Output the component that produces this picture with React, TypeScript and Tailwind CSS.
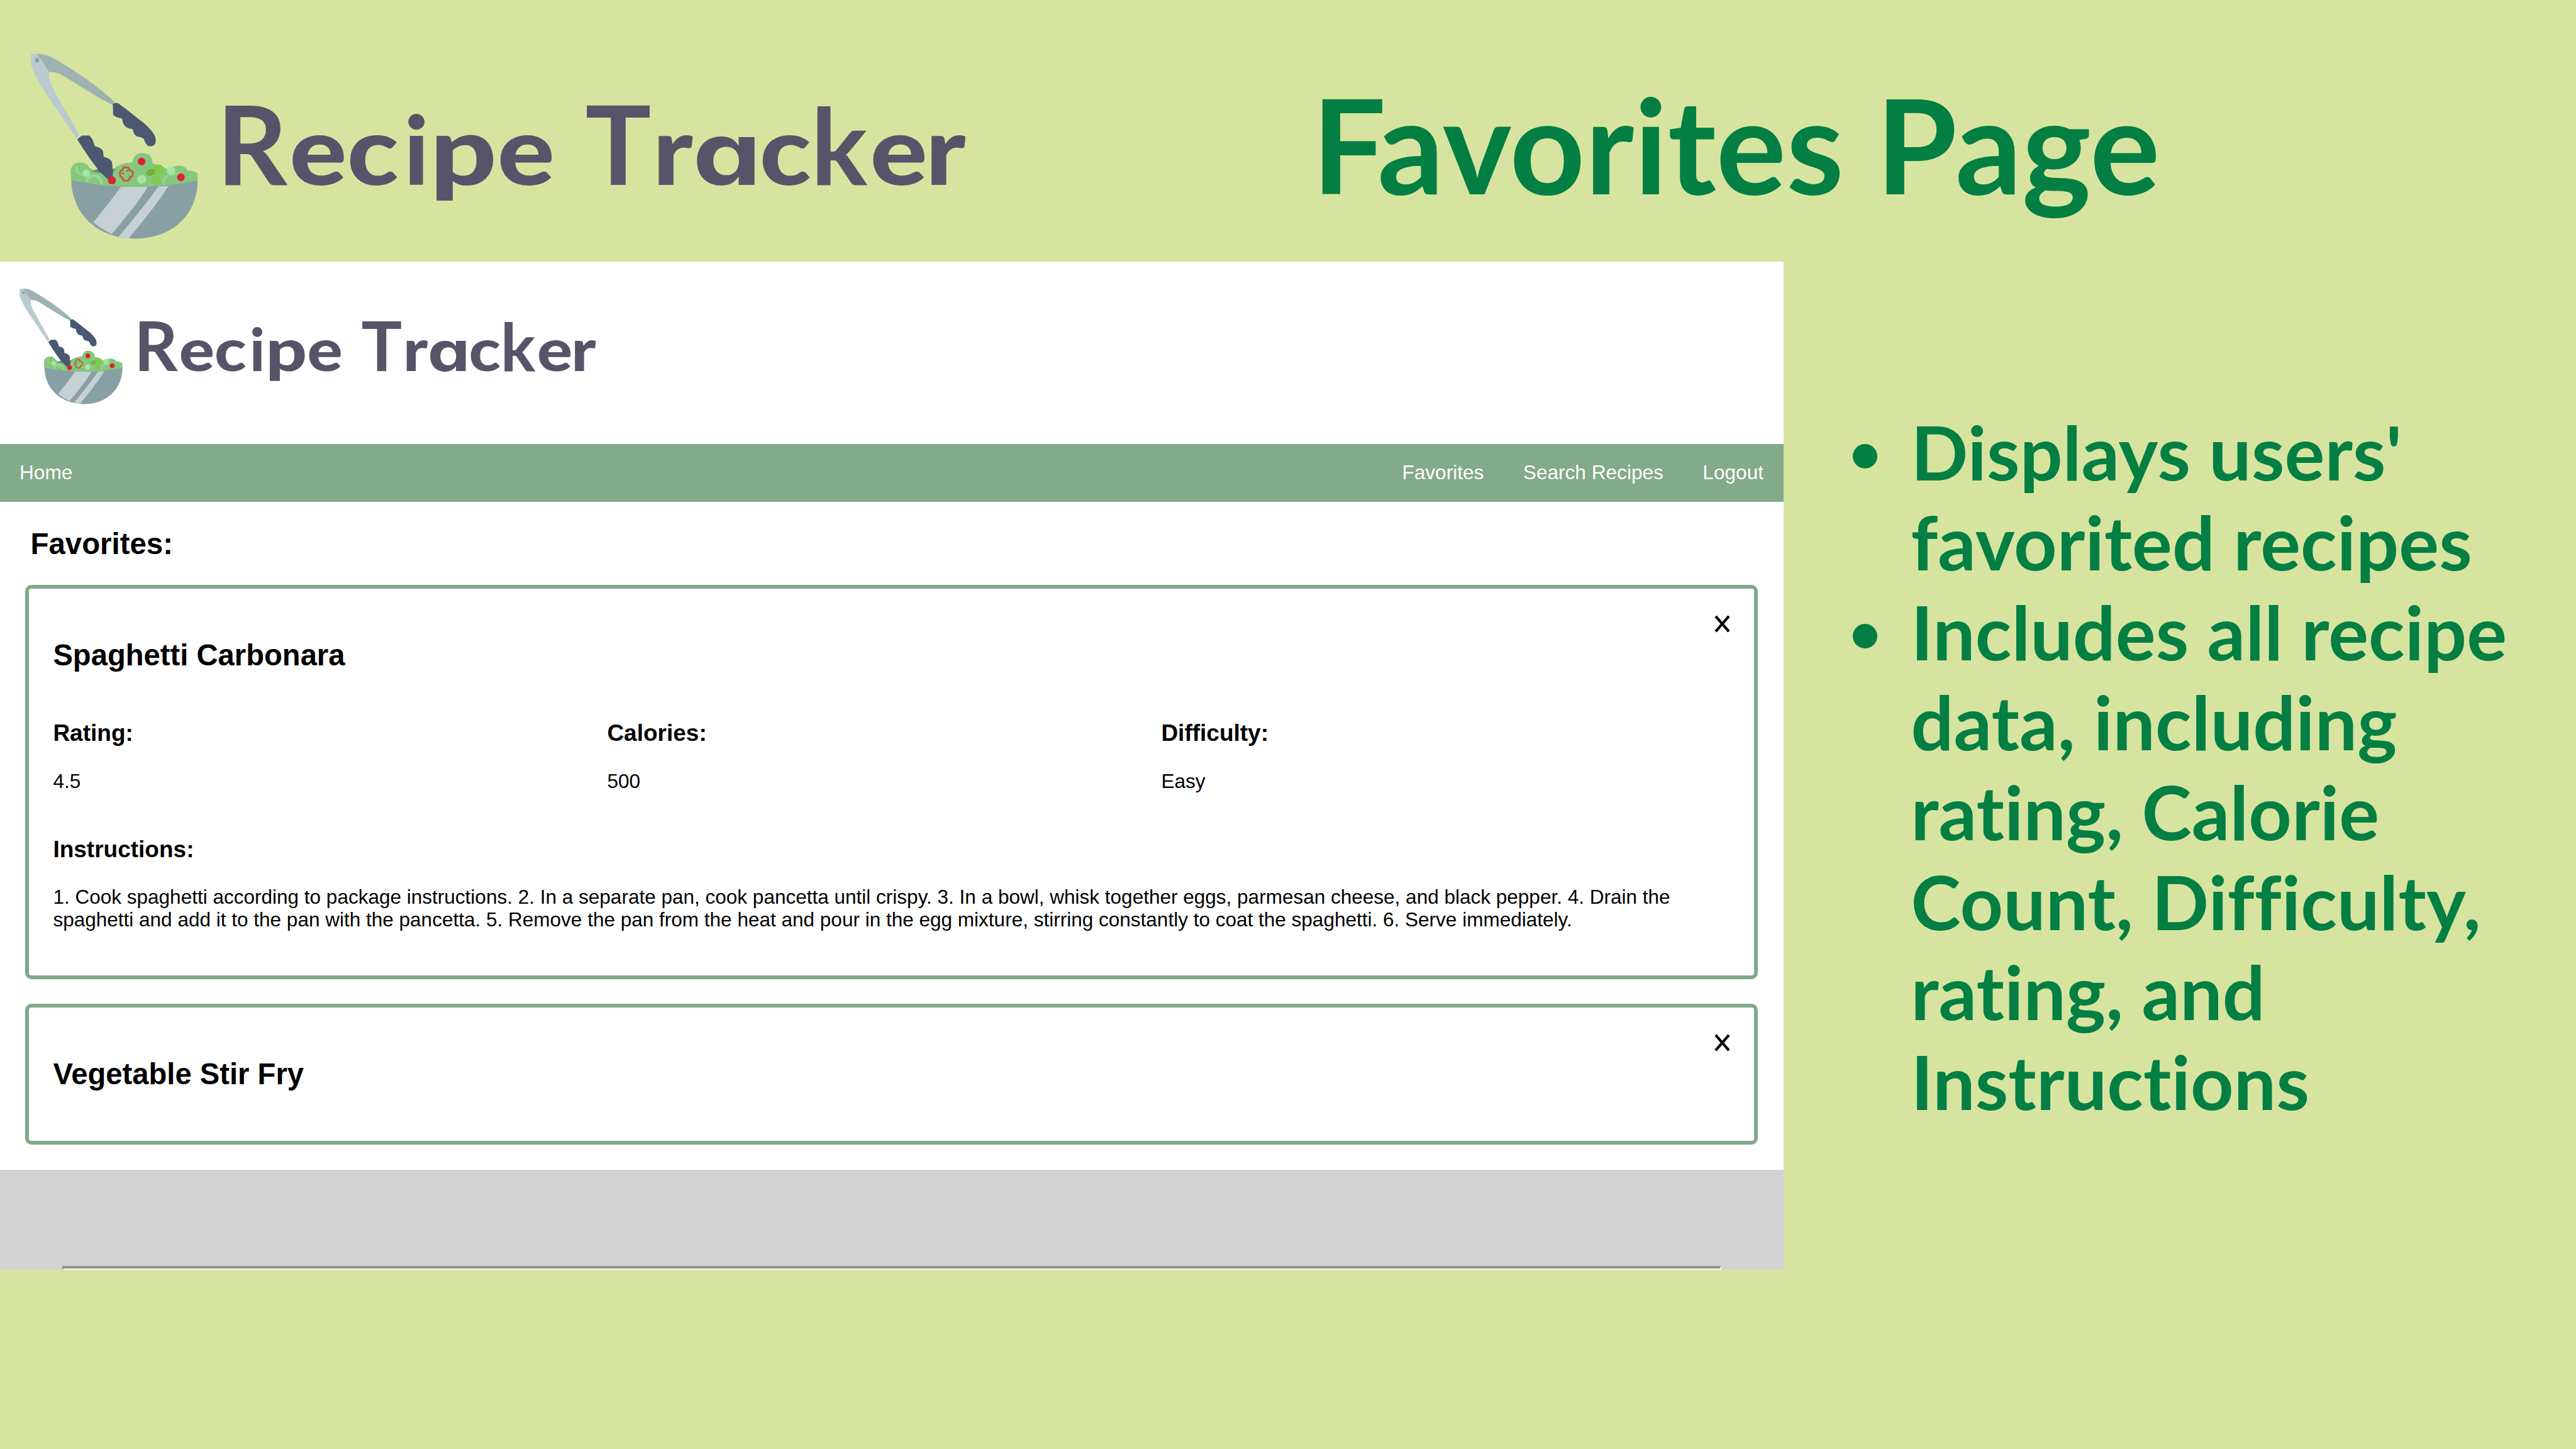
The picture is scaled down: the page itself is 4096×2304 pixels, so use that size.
import React from "react";

function SaladMark() {
  return (
    <g transform="translate(-1.5 40.5) scale(0.24381)">
      {/* far tong arm */}
      <path
        d="M240 186 Q300 182 352 212 Q440 262 540 330 Q640 396 752 496 L742 520 Q640 468 540 404 Q450 345 392 314 Q360 300 326 304 L262 230 Z"
        fill="#9eb2b2"
      />
      {/* near tong arm */}
      <path
        d="M208 186 L246 186 L290 244 L326 306 Q320 345 345 395 Q410 520 524 712 L506 738 Q400 580 316 460 Q222 320 208 250 Z"
        fill="#b9cbcf"
      />
      <rect x="235" y="213" width="25" height="27" fill="#8b9ea8" />
      {/* salad */}
      <path
        d="M468 1008 L466 950 Q470 895 535 893 Q575 896 590 930 L652 960 L740 940 Q790 895 868 893 Q880 832 936 832 Q1000 838 1002 900 Q1030 905 1060 915 Q1085 935 1100 935 Q1130 915 1180 915 Q1222 922 1228 946 Q1280 946 1294 966 L1295 1020 Q1090 1056 880 1056 Q640 1052 468 1008 Z"
        fill="#84c77d"
      />
      <path d="M505 915 Q500 965 545 975" stroke="#9ad394" strokeWidth="12" fill="none" />
      <path d="M572 1015 Q585 975 630 980 Q668 990 668 1036" stroke="#9cd696" strokeWidth="16" fill="none" />
      <path d="M1075 1040 Q1060 990 1110 978 L1170 965" stroke="#94d38c" strokeWidth="16" fill="none" />
      <circle cx="568" cy="964" r="24" fill="#a6e6a0" />
      <circle cx="930" cy="1004" r="29" fill="#a5e59e" />
      <circle cx="1122" cy="946" r="28" fill="#a6e6a0" />
      <circle cx="1040" cy="942" r="36" fill="#83ca4a" />
      <circle cx="1027" cy="1010" r="29" fill="#83ca4a" />
      <path d="M955 962 L980 936 L1018 936 L1014 972 L980 982 Z" fill="#74b13c" />
      <path d="M600 952 L650 934 L760 934 L745 962 L655 962 Z" fill="#648a80" />
      {/* tong grips */}
      <path
        d="M742 512 Q755 500 778 508 Q860 570 920 618 Q975 655 1012 712 Q1028 740 1018 772 Q1005 792 975 786 Q955 775 945 740 Q930 728 900 724 Q878 715 872 676 Q830 672 816 650 Q806 635 802 606 Q765 602 744 582 Z"
        fill="#4a5872"
      />
      <path
        d="M510 742 L540 718 L588 718 Q612 735 624 788 Q665 795 678 820 L682 856 Q722 865 735 888 Q742 915 742 990 L712 1004 Q690 985 650 945 Q575 850 510 742 Z"
        fill="#4a5872"
      />
      {/* tomatoes and pepper */}
      <circle cx="930" cy="887" r="25" fill="#dd1f31" />
      <circle cx="736" cy="1010" r="26" fill="#dd1f31" />
      <circle cx="1186" cy="990" r="25" fill="#dd1f31" />
      <path
        d="M824 924 Q850 924 850 944 Q876 948 872 974 Q868 990 852 992 Q852 1014 828 1014 Q806 1010 804 992 Q786 984 788 964 Q790 946 804 944 Q806 924 824 924 Z"
        fill="#84c77d"
        stroke="#c65a3c"
        strokeWidth="12"
      />
      <path d="M800 964 L816 966 M838 942 L834 954 M850 984 L862 988" stroke="#c65a3c" strokeWidth="10" />
      {/* bowl */}
      <path
        d="M470 1008 Q660 1052 880 1052 Q1090 1052 1295 1012 C1295 1240 1120 1390 890 1390 C650 1390 478 1240 470 1008 Z"
        fill="#889fa4"
      />
      <path d="M795 1052 L968 1052 Q930 1130 735 1360 Q670 1330 615 1283 Q700 1180 795 1052 Z" fill="#c7d1d3" />
      <path d="M1040 1050 L1105 1047 Q1020 1180 845 1389 L778 1380 Q930 1200 1040 1050 Z" fill="#c7d1d3" />
    </g>
  );
}

const small = { fontSize: 151, fontWeight: 900, lengthAdjust: "spacingAndGlyphs" as const };
const caps = { fontSize: 175, fontWeight: 700 };

function Logo({ className, viewBox, baseline }: { className: string; viewBox: string; baseline: number }) {
  return (
    <svg className={className} viewBox={viewBox} preserveAspectRatio="none">
      <SaladMark />
      <text y={baseline} fill="#575469" fontFamily="Lato, sans-serif">
        <tspan x="344.5" {...caps}>R</tspan>
        <tspan x="460.3" textLength="91.2" {...small}>e</tspan>
        <tspan x="551.7" textLength="82" {...small}>c</tspan>
        <tspan x="642.4" fontSize="151" fontWeight="900">i</tspan>
        <tspan x="683.6" textLength="106.6" {...small}>p</tspan>
        <tspan x="790.7" textLength="91.2" {...small}>e</tspan>
        <tspan fontSize="100"> </tspan>
        <tspan x="930.4" {...caps}>T</tspan>
        <tspan x="1037.8" textLength="64" {...small}>r</tspan>
        <tspan
          x="1101.5"
          textLength="109"
          lengthAdjust="spacingAndGlyphs"
          fontSize="140"
          fontWeight="700"
          fontFamily="Inter, sans-serif"
          style={{ fontFeatureSettings: "'cv11' 1" }}
        >
          a
        </tspan>
        <tspan x="1207.7" textLength="82" {...small}>c</tspan>
        <tspan x="1289.6" fontSize="168" fontWeight="700">k</tspan>
        <tspan x="1383.5" textLength="91.2" {...small}>e</tspan>
        <tspan x="1471.6" textLength="64" {...small}>r</tspan>
      </text>
    </svg>
  );
}

function CloseButton() {
  return (
    <button className="absolute right-[38.5px] top-[41.5px]" aria-label="Remove">
      <svg className="block h-[28px] w-[25px]" viewBox="0 0 25 28">
        <path d="M2 1.8 L23 26.2 M23 1.8 L2 26.2" stroke="#000" strokeWidth="4.3" />
      </svg>
    </button>
  );
}

const stats = [
  { label: "Rating:", value: "4.5" },
  { label: "Calories:", value: "500" },
  { label: "Difficulty:", value: "Easy" },
];

function AppPreview() {
  return (
    <section className="flex h-[1602.5px] w-[2836px] shrink-0 flex-col overflow-hidden bg-white font-['Liberation_Sans',Arial,sans-serif] text-black">
      <div className="h-[289.6px] shrink-0">
        <Logo className="block h-[289.6px] w-[962px]" viewBox="-1.4 16.7 1560 463.8" baseline={295.8} />
      </div>
      <nav className="flex h-[92px] shrink-0 items-start justify-between bg-[#83aa89] pl-[31px] pr-[32px] pt-[30.4px] text-[31.6px] leading-none text-white">
        <a>Home</a>
        <div className="flex gap-[62.5px]">
          <a>Favorites</a>
          <a>Search Recipes</a>
          <a>Logout</a>
        </div>
      </nav>
      <h2 className="ml-[48.5px] mt-[42.6px] shrink-0 text-[47.4px] font-bold leading-[48px]">Favorites:</h2>

      <article className="relative ml-[40px] mt-[41.7px] h-[627px] w-[2755px] shrink-0 rounded-[10px] border-[6px] border-[#80a986] pl-[38.4px] pt-[82px]">
        <CloseButton />
        <h3 className="text-[47.2px] font-bold leading-[48px]">Spaghetti Carbonara</h3>
        <div className="mt-[81.2px] grid grid-cols-[881px_881px_881px]">
          {stats.map((s) => (
            <div key={s.label}>
              <h4 className="text-[37px] font-bold leading-[37px]">{s.label}</h4>
              <p className="mt-[42px] text-[31.6px] leading-[32px]">{s.value}</p>
            </div>
          ))}
        </div>
        <h4 className="mt-[73.3px] text-[37px] font-bold leading-[37px]">Instructions:</h4>
        <p className="mt-[39.5px] w-[2671px] text-[31.53px] leading-[36.2px]">
          1. Cook spaghetti according to package instructions. 2. In a separate pan, cook pancetta until crispy. 3. In a
          bowl, whisk together eggs, parmesan cheese, and black pepper. 4. Drain the spaghetti and add it to the pan
          with the pancetta. 5. Remove the pan from the heat and pour in the egg mixture, stirring constantly to coat
          the spaghetti. 6. Serve immediately.
        </p>
      </article>

      <article className="relative ml-[40px] mt-[39.2px] h-[224px] w-[2755px] shrink-0 rounded-[10px] border-[6px] border-[#80a986] pl-[38.4px] pt-[82px]">
        <CloseButton />
        <h3 className="text-[47.2px] font-bold leading-[48px]">Vegetable Stir Fry</h3>
      </article>

      <footer className="mt-[39.4px] flex-1 bg-[#d2d2d2] pt-[153px]">
        <hr className="ml-[99px] h-0 w-[2638px] border-b-2 border-l-[3px] border-r-[3px] border-t-4 border-b-[#f2f2f2] border-l-[#94948e] border-r-[#f2f2f2] border-t-[#94948e]" />
      </footer>
    </section>
  );
}

const notes = [
  "Displays users' favorited recipes",
  "Includes all recipe data, including rating, Calorie Count, Difficulty, rating, and Instructions",
];

export default function App() {
  return (
    <main className="flex h-[2304px] w-[4096px] flex-col overflow-hidden bg-[#d7e4a0] font-['Lato',sans-serif] text-[#047f43]">
      <header className="flex h-[416.4px] shrink-0 items-start">
        <Logo className="block h-[416px] w-[1560px] shrink-0" viewBox="0 0 1560 416" baseline={293.8} />
        <h1 className="ml-[526px] mt-[124px] whitespace-nowrap text-[208.4px] font-bold leading-none tracking-[0.25px]">
          Favorites Page
        </h1>
      </header>
      <div className="flex items-start">
        <AppPreview />
        <ul className="ml-[110px] mt-[229.4px] text-[119.6px] font-bold leading-[143.1px] tracking-[0.1px]">
          {notes.map((n) => (
            <li key={n} className="flex">
              <span className="mr-[53.5px] mt-[60px] size-[39px] shrink-0 rounded-full bg-[#047f43]" />
              <span className="w-[1000px] [font-variant-ligatures:none]">{n}</span>
            </li>
          ))}
        </ul>
      </div>
    </main>
  );
}
